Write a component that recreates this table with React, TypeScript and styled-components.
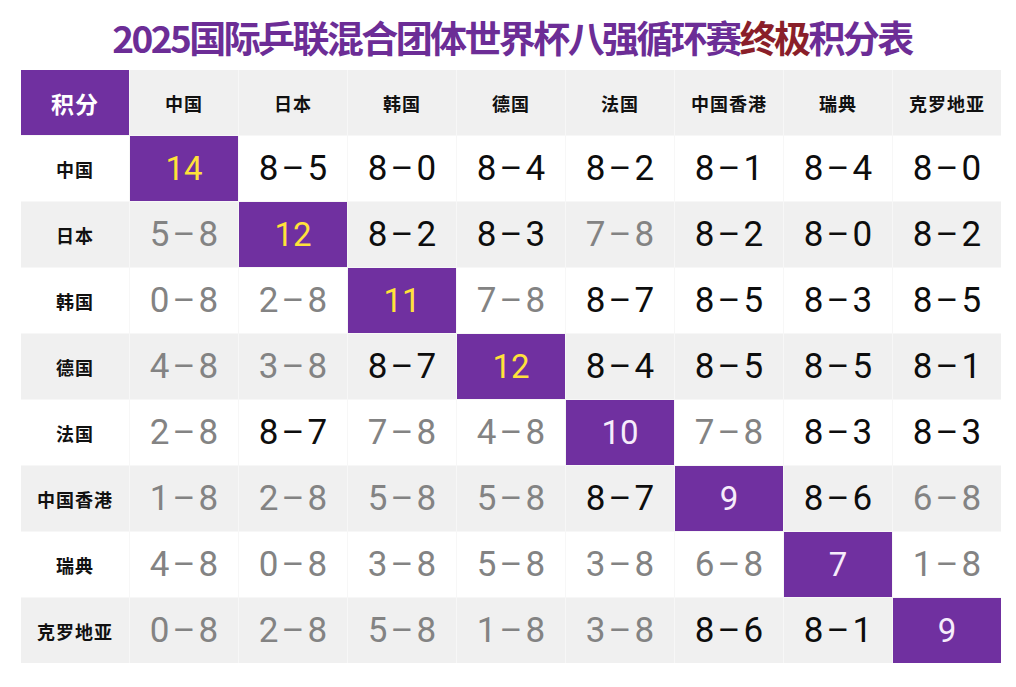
import React, { FC } from 'react';
import styled, { createGlobalStyle } from 'styled-components';

const GlobalStyle = createGlobalStyle`
  html, body {
    margin: 0;
    padding: 0;
    background: #ffffff;
  }
  body {
    font-family: 'Noto Sans CJK SC', 'Noto Sans', sans-serif;
  }
`;

const StyledPage = styled.div`
  width: 1016px;
  height: 687px;
  background: #ffffff;
  overflow: hidden;
`;

const StyledTitle = styled.h1`
  margin: 0;
  height: 70px;
  display: flex;
  align-items: center;
  justify-content: center;
  padding-left: 8px;
  padding-top: 4px;
  font-family: 'Noto Sans CJK SC', sans-serif;
  font-size: 37px;
  font-weight: 700;
  letter-spacing: -2.6px;
  color: #6c2d96;
  box-sizing: border-box;
`;

const StyledAccent = styled.span`
  color: #8a1f2a;
`;

const StyledGrid = styled.div`
  margin-left: 21px;
  display: grid;
  grid-template-columns: repeat(9, 108px);
  grid-auto-rows: 65px;
  gap: 1px;
  width: max-content;
  background: #f7f7f7;
`;

type CellTone = 'white' | 'gray' | 'purple';

const toneBg: Record<CellTone, string> = {
  white: '#ffffff',
  gray: '#f0f0f0',
  purple: '#7030a0',
};

const StyledCell = styled.div<{ $tone: CellTone }>`
  display: flex;
  align-items: center;
  justify-content: center;
  background: ${({ $tone }) => toneBg[$tone]};
`;

const StyledCorner = styled(StyledCell)`
  font-size: 23px;
  font-weight: 700;
  color: #ffffff;
  letter-spacing: 1px;
`;

const StyledTeam = styled(StyledCell)`
  font-size: 18px;
  font-weight: 700;
  color: #111111;
  letter-spacing: 1px;
`;

const StyledScore = styled(StyledCell)<{ $win: boolean }>`
  font-family: 'Roboto', 'Liberation Sans', sans-serif;
  font-size: 35px;
  font-weight: 400;
  color: ${({ $win }) => ($win ? '#0d0d0d' : '#838383')};
  letter-spacing: 3px;
  padding-left: 3px;
`;

const StyledTotal = styled(StyledCell)<{ $gold: boolean }>`
  font-family: 'Roboto', 'Liberation Sans', sans-serif;
  font-size: 33px;
  font-weight: 400;
  color: ${({ $gold }) => ($gold ? '#ffe23a' : '#f6ecfb')};
`;

const teams = ['中国', '日本', '韩国', '德国', '法国', '中国香港', '瑞典', '克罗地亚'];

const results: string[][] = [
  ['14', '8-5', '8-0', '8-4', '8-2', '8-1', '8-4', '8-0'],
  ['5-8', '12', '8-2', '8-3', '7-8', '8-2', '8-0', '8-2'],
  ['0-8', '2-8', '11', '7-8', '8-7', '8-5', '8-3', '8-5'],
  ['4-8', '3-8', '8-7', '12', '8-4', '8-5', '8-5', '8-1'],
  ['2-8', '8-7', '7-8', '4-8', '10', '7-8', '8-3', '8-3'],
  ['1-8', '2-8', '5-8', '5-8', '8-7', '9', '8-6', '6-8'],
  ['4-8', '0-8', '3-8', '5-8', '3-8', '6-8', '7', '1-8'],
  ['0-8', '2-8', '5-8', '1-8', '3-8', '8-6', '8-1', '9'],
];

const App: FC = () => {
  return (
    <StyledPage>
      <GlobalStyle />
      <StyledTitle>
        2025国际乒联混合团体世界杯八强循环赛<StyledAccent>终极</StyledAccent>积分表
      </StyledTitle>
      <StyledGrid>
        <StyledCorner $tone='purple'>积分</StyledCorner>
        {teams.map((team) => (
          <StyledTeam key={`h-${team}`} $tone='gray'>
            {team}
          </StyledTeam>
        ))}
        {teams.map((team, row) => {
          const tone: CellTone = row % 2 === 0 ? 'white' : 'gray';
          return (
            <React.Fragment key={team}>
              <StyledTeam $tone={tone}>{team}</StyledTeam>
              {results[row].map((value, col) => {
                if (row === col) {
                  return (
                    <StyledTotal key={col} $tone='purple' $gold={row < 4}>
                      {value}
                    </StyledTotal>
                  );
                }
                const [a, b] = value.split('-');
                return (
                  <StyledScore key={col} $tone={tone} $win={Number(a) > Number(b)}>
                    {a}–{b}
                  </StyledScore>
                );
              })}
            </React.Fragment>
          );
        })}
      </StyledGrid>
    </StyledPage>
  );
};

export default App;
